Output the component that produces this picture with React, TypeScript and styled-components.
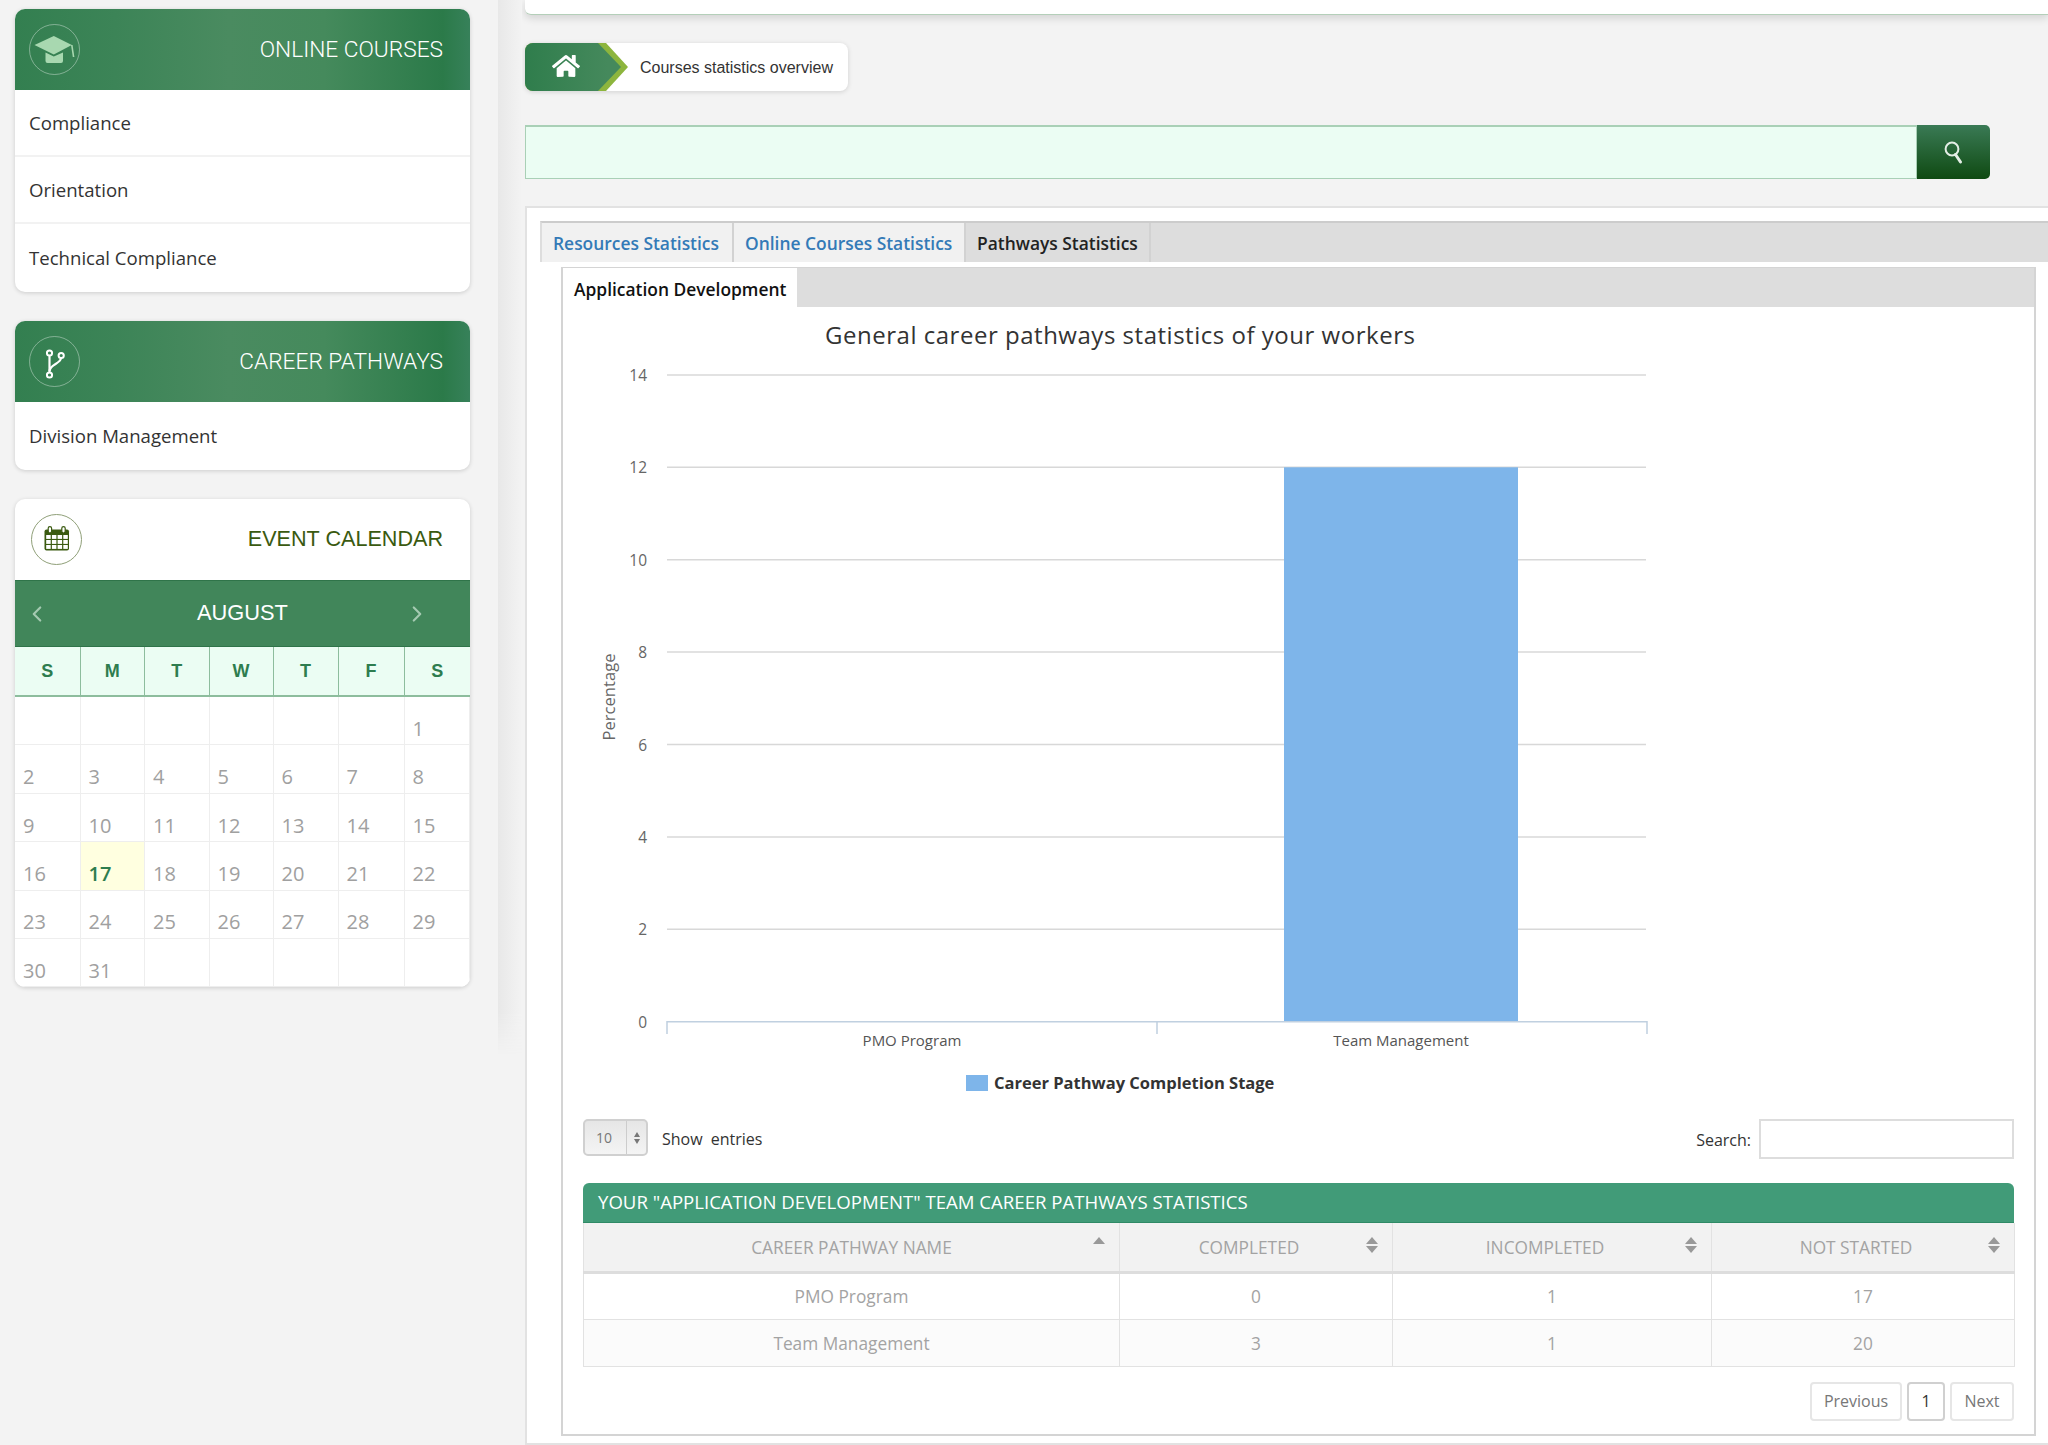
import React from "react";
import styled, { createGlobalStyle } from "styled-components";
import { FaHome } from "react-icons/fa";
import { ChevronLeft, ChevronRight } from "lucide-react";

const GlobalStyle = createGlobalStyle`
  html, body {
    margin: 0;
    padding: 0;
    background: #f3f3f3;
  }
  * {
    box-sizing: border-box;
  }
`;

const sans = `"Open Sans", "Liberation Sans", sans-serif`;
const arial = `"Liberation Sans", Arial, sans-serif`;

const Page = styled.div`
  width: 2048px;
  height: 1445px;
  display: flex;
  overflow: hidden;
  background: #f3f3f3;
  font-family: ${sans};
`;

const Sidebar = styled.aside`
  width: 498px;
  flex: none;
  padding: 9px 28px 0 15px;
  display: flex;
  flex-direction: column;
  gap: 29px;
`;

const Card = styled.section`
  background: #fff;
  border-radius: 10px;
  box-shadow: 0 1px 4px rgba(0, 0, 0, 0.16);
  overflow: hidden;
`;

const CardHead = styled.header`
  height: 81px;
  padding: 0 27px 0 14px;
  display: flex;
  align-items: center;
  justify-content: space-between;
  background: linear-gradient(90deg, #337f50 0%, #3c8457 22%, #4a8b60 47%, #458a5c 68%, #2b7a49 94%, #37815a 100%);
`;

const CardTitle = styled.h2`
  margin: 0 0 1px;
  font-family: Roboto, ${arial};
  font-weight: 300;
  font-size: 22.7px;
  color: #fff;
`;

const CardItem = styled.div<{ $last?: boolean }>`
  height: ${(p) => (p.$last ? 68 : 67)}px;
  padding: 0 0 ${(p) => (p.$last ? 2 : 0)}px 14px;
  display: flex;
  align-items: center;
  font-size: 18.6px;
  color: #333;
  border-bottom: ${(p) => (p.$last ? "none" : "2px solid #f2f2f2")};
`;

const CalendarHead = styled.header`
  height: 81px;
  padding: 0 27px 0 16px;
  display: flex;
  align-items: center;
  justify-content: space-between;
`;

const CalendarTitle = styled.h2`
  margin: 0 0 2px;
  font-family: ${arial};
  font-weight: 400;
  font-size: 21.6px;
  color: #3a5a10;
`;

const MonthBar = styled.div`
  height: 67px;
  padding: 0 9px;
  display: grid;
  grid-template-columns: 1fr auto 1fr;
  align-items: center;
  background: #41865a;
  border-top: 1px solid #2f7449;
  border-bottom: 1px solid #2f7449;
  color: #a3c9b0;
`;

const MonthArrow = styled.span<{ $right?: boolean }>`
  display: flex;
  justify-content: ${(p) => (p.$right ? "flex-end" : "flex-start")};
  padding-right: ${(p) => (p.$right ? "31px" : "0")};
`;

const MonthName = styled.span`
  font-family: ${arial};
  font-size: 21.8px;
  color: #fff;
  margin-bottom: 1px;
`;

const Weekdays = styled.div`
  height: 50px;
  display: grid;
  grid-template-columns: 65.5px 64.5px 64.5px 64px 65px 66px 65.5px;
  background: #ebfdf3;
  border-bottom: 2px solid #8dbd9d;
`;

const Weekday = styled.div<{ $last?: boolean }>`
  display: flex;
  align-items: center;
  justify-content: center;
  font-family: ${arial};
  font-weight: 700;
  font-size: 18px;
  color: #2e7d4f;
  border-right: ${(p) => (p.$last ? "none" : "1px solid #8dbd9d")};
`;

const Days = styled.div`
  display: grid;
  grid-template-columns: 65.5px 64.5px 64.5px 64px 65px 66px 65.5px;
  grid-auto-rows: 48.4px;
`;

const Day = styled.div<{ $today?: boolean }>`
  padding: 0 0 2.5px 8px;
  display: flex;
  align-items: flex-end;
  font-size: 20px;
  font-weight: ${(p) => (p.$today ? 600 : 400)};
  color: ${(p) => (p.$today ? "#2e7d4f" : "#a0a0a0")};
  background: ${(p) => (p.$today ? "#ffffe0" : "#fff")};
  border-right: 1px solid #eee;
  border-bottom: 1px solid #eee;
`;

const Main = styled.main`
  position: relative;
  flex: 1;
  min-width: 0;
  padding-left: 27px;
  display: flex;
  flex-direction: column;
  &::before {
    content: "";
    position: absolute;
    left: 0;
    top: 0;
    width: 24px;
    height: 1055px;
    background: linear-gradient(90deg, #e8e8e8, #f3f3f3);
    -webkit-mask-image: linear-gradient(180deg, #000 96%, transparent);
    mask-image: linear-gradient(180deg, #000 96%, transparent);
  }
`;

const TopStrip = styled.div`
  height: 15px;
  flex: none;
  background: #fff;
  border-bottom: 1px solid #b4cfb9;
  border-bottom-left-radius: 6px;
  box-shadow: 0 3px 8px rgba(0, 0, 0, 0.14);
`;

const Breadcrumb = styled.nav`
  margin-top: 28px;
  width: 323px;
  height: 48px;
  flex: none;
  display: flex;
  align-items: center;
  background: #fff;
  border-radius: 8px;
  box-shadow: 0 1px 5px rgba(0, 0, 0, 0.14);
  overflow: hidden;
`;

const HomeChevron = styled.div`
  width: 103px;
  height: 48px;
  flex: none;
  background: #8db53d;
  clip-path: polygon(0 0, 81px 0, 103px 50%, 81px 100%, 0 100%);
`;

const HomeTab = styled.div`
  height: 48px;
  padding: 0 0 2px 27px;
  display: flex;
  align-items: center;
  background: linear-gradient(90deg, #2f7d4c, #45895c 80%);
  color: #fff;
  clip-path: polygon(0 0, 73px 0, 96px 50%, 73px 100%, 0 100%);
`;

const CrumbText = styled.span`
  margin: 2px 0 0 12px;
  font-family: ${arial};
  font-size: 16px;
  color: #333;
`;

const SearchRow = styled.div`
  margin-top: 34px;
  height: 54px;
  flex: none;
  display: flex;
`;

const SearchInput = styled.input`
  width: 1392px;
  height: 54px;
  background: #ebfdf3;
  border: 1px solid #a9d0b6;
  border-top-width: 2px;
  outline: none;
`;

const SearchButton = styled.button`
  width: 73px;
  height: 54px;
  padding: 0;
  display: flex;
  align-items: center;
  justify-content: center;
  background: linear-gradient(180deg, #3a7a55, #0f4a12);
  border: none;
  border-radius: 0 5px 5px 0;
`;

const Panel = styled.section`
  margin: 27px -4px 0 0;
  flex: 1;
  padding: 13px 0 0 13px;
  background: #fff;
  border: 2px solid #e2e2e2;
`;

const TabBar = styled.div`
  height: 41px;
  display: flex;
  background: #ddd;
  border-top: 2px solid #ccc;
  border-left: 2px solid #ddd;
`;

const Tab = styled.div<{ $active?: boolean; $width: number }>`
  width: ${(p) => p.$width}px;
  padding-left: 11px;
  display: flex;
  align-items: center;
  font-size: 17.4px;
  font-weight: 600;
  color: ${(p) => (p.$active ? "#222" : "#337ab7")};
  background: ${(p) => (p.$active ? "#ddd" : "#f1f1f1")};
  border-right: 2px solid #d2d2d2;
`;

const Inner = styled.div`
  margin: 5px 0 0 21px;
  width: 1475px;
  height: 1169px;
  background: #fff;
  border: 2px solid #d4d4d4;
  border-top-width: 1px;
`;

const InnerBar = styled.div`
  height: 39px;
  background: #ddd;
`;

const InnerTab = styled.div`
  width: 234px;
  height: 39px;
  padding: 2px 0 0 11px;
  display: flex;
  align-items: center;
  font-size: 17.4px;
  font-weight: 600;
  color: #111;
  background: #fff;
`;

const Chart = styled.svg`
  display: block;
  width: 1471px;
  height: 798px;
  font-family: ${sans};
`;

const Controls = styled.div`
  margin-top: 14px;
  padding: 0 20px;
  height: 40px;
  display: flex;
  justify-content: space-between;
`;

const LengthGroup = styled.label`
  display: flex;
  align-items: flex-start;
  gap: 14px;
  font-size: 16px;
  color: #333;
`;

const LengthSelect = styled.div`
  width: 65px;
  height: 37px;
  display: grid;
  grid-template-columns: 42px 1fr;
  background: linear-gradient(180deg, #e6e6e6, #f4f4f4);
  border: 2px solid #d0d0d0;
  border-radius: 5px;
  font-size: 14px;
  color: #777;
`;

const SelectValue = styled.span`
  padding-right: 3px;
  display: flex;
  align-items: center;
  justify-content: center;
  border-right: 1px solid #ccc;
`;

const SelectArrows = styled.span`
  display: flex;
  align-items: center;
  justify-content: center;
`;

const LengthText = styled.span`
  margin-top: 9px;
  word-spacing: 4px;
`;

const SearchGroup = styled.label`
  display: flex;
  align-items: flex-start;
  gap: 8px;
  font-size: 16px;
  color: #333;
`;

const SearchLabel = styled.span`
  margin-top: 10px;
`;

const FilterInput = styled.input`
  width: 255px;
  height: 40px;
  background: #fff;
  border: 2px solid #ddd;
  outline: none;
`;

const Caption = styled.div`
  margin: 24px 20px 0;
  height: 40px;
  padding: 0 0 2px 15px;
  display: flex;
  align-items: center;
  font-size: 18.6px;
  color: #fff;
  background: #419b78;
  border-bottom: 1px solid #2f8a66;
  border-radius: 6px 6px 0 0;
`;

const Table = styled.table`
  margin: 0 20px;
  width: 1431px;
  border-collapse: collapse;
  table-layout: fixed;
  color: #a3a3a3;
  font-size: 17.3px;
`;

const HeadCell = styled.th<{ $width: number; $first?: boolean }>`
  position: relative;
  width: ${(p) => p.$width}px;
  height: 49px;
  padding: 1px ${(p) => (p.$first ? 0 : 14)}px 0 0;
  background: #f2f2f2;
  font-weight: 400;
  text-align: center;
  border: 1px solid #e2e2e2;
  border-top: none;
  border-bottom: 3px solid #ddd;
`;

const SortIcon = styled.svg`
  position: absolute;
  right: 13px;
  top: 13px;
`;

const BodyRow = styled.tr<{ $alt?: boolean }>`
  background: ${(p) => (p.$alt ? "#fbfbfb" : "#fff")};
`;

const BodyCell = styled.td`
  height: 47px;
  padding: 1px 0 0;
  text-align: center;
  border: 1px solid #e2e2e2;
`;

const Pager = styled.div`
  margin: 15px 20px 0;
  display: flex;
  justify-content: flex-end;
  gap: 5px;
`;

const PageButton = styled.span<{ $current?: boolean; $width: number }>`
  width: ${(p) => p.$width}px;
  height: 39px;
  display: flex;
  align-items: center;
  justify-content: center;
  font-size: 16px;
  color: ${(p) => (p.$current ? "#333" : "#777")};
  background: #fff;
  border: 2px solid ${(p) => (p.$current ? "#d0d0d0" : "#e6e6e6")};
  border-radius: 4px;
`;

const GradCap = () => (
  <svg width="51" height="51" viewBox="0 0 51 51">
    <circle cx="25.5" cy="25.5" r="25" fill="none" stroke="rgba(255,255,255,0.38)" strokeWidth="1" />
    <path d="M16.5 28.5 L24.8 32.5 L34 28.5 V37 Q34 39 32 39 H18.5 Q16.5 39 16.5 37 Z" fill="#a8d8b0" />
    <path d="M5.5 21 L24.8 12 L42.8 21 L24.8 30.5 Z" fill="#a8d8b0" />
    <path d="M42.8 21 L44.6 33" stroke="#a8d8b0" strokeWidth="1.6" fill="none" />
  </svg>
);

const BranchIcon = () => (
  <svg width="51" height="51" viewBox="0 0 51 51">
    <circle cx="25.5" cy="25.5" r="25" fill="none" stroke="rgba(255,255,255,0.38)" strokeWidth="1" />
    <g fill="none" stroke="#fff" strokeWidth="2">
      <circle cx="20.5" cy="17" r="2.6" />
      <circle cx="32.2" cy="19.5" r="2.6" />
      <circle cx="20.5" cy="39" r="2.6" />
      <path d="M20.5 19.6 V36.4" strokeWidth="2.2" />
      <path d="M32 22 C31.5 28 21 28 20.5 35" strokeWidth="2.2" />
    </g>
  </svg>
);

const CalendarIcon = () => (
  <svg width="51" height="51" viewBox="0 0 51 51">
    <circle cx="25.5" cy="25.5" r="25" fill="#fff" stroke="#8f9f78" strokeWidth="1" />
    <rect x="13.5" y="15.5" width="24.5" height="21" rx="2" fill="#3a5a10" />
    <g fill="#fff">
      {[0, 1, 2, 3].map((col) =>
        [0, 1, 2].map((row) => (
          <rect key={`${col}-${row}`} x={15.2 + col * 5.7} y={21 + row * 5} width="4.5" height="3.9" />
        ))
      )}
    </g>
    <rect x="17.2" y="12.6" width="3.4" height="6.4" rx="1.7" fill="#fff" stroke="#3a5a10" strokeWidth="1.2" />
    <rect x="30.8" y="12.6" width="3.4" height="6.4" rx="1.7" fill="#fff" stroke="#3a5a10" strokeWidth="1.2" />
  </svg>
);

const SearchGlyph = () => (
  <svg width="22" height="24" viewBox="0 0 22 24">
    <circle cx="9" cy="9" r="6.4" fill="none" stroke="#e4eee6" strokeWidth="2" />
    <path d="M12.5 14.5 L17.5 22" stroke="#e4eee6" strokeWidth="3" strokeLinecap="round" />
  </svg>
);

const SortArrows = ({ up }: { up?: boolean }) => (
  <SortIcon width="14" height="18" viewBox="0 0 14 18">
    <path d="M1 8 L7 1 L13 8 Z" fill="#999" />
    {!up && <path d="M1 10 L7 17 L13 10 Z" fill="#999" />}
  </SortIcon>
);

const yTicks = [14, 12, 10, 8, 6, 4, 2, 0];
const chartZero = 1021.7;
const perUnit = 46.2;

const CareerChart = () => (
  <Chart viewBox="563 307 1471 798">
    <text x="825" y="344" fontSize="24" letterSpacing="0.52" fill="#333">
      General career pathways statistics of your workers
    </text>
    {yTicks.slice(0, 7).map((t) => (
      <line key={t} x1="667" x2="1646" y1={chartZero - t * perUnit} y2={chartZero - t * perUnit} stroke="#d8d8d8" strokeWidth="1.5" />
    ))}
    {yTicks.map((t) => (
      <text key={t} x="647" y={chartZero - t * perUnit + 6} textAnchor="end" fontSize="15.5" fill="#666">
        {t}
      </text>
    ))}
    <text transform="translate(615 697) rotate(-90)" textAnchor="middle" fontSize="16.6" fill="#666">
      Percentage
    </text>
    <rect x="1284" y={chartZero - 12 * perUnit} width="234" height={12 * perUnit} fill="#7eb5ea" />
    <path d="M667 1034 V1021.7 H1647 V1034 M1157 1021.7 V1034" fill="none" stroke="#c0d0e0" strokeWidth="1.5" />
    <text x="912" y="1046" textAnchor="middle" fontSize="15" fill="#555">
      PMO Program
    </text>
    <text x="1401" y="1046" textAnchor="middle" fontSize="15" fill="#555">
      Team Management
    </text>
    <rect x="966" y="1075" width="22" height="16" fill="#7eb5ea" />
    <text x="994" y="1089" fontSize="16.5" fontWeight="700" fill="#333">
      Career Pathway Completion Stage
    </text>
  </Chart>
);

const dayRows: (number | null)[][] = [
  [null, null, null, null, null, null, 1],
  [2, 3, 4, 5, 6, 7, 8],
  [9, 10, 11, 12, 13, 14, 15],
  [16, 17, 18, 19, 20, 21, 22],
  [23, 24, 25, 26, 27, 28, 29],
  [30, 31, null, null, null, null, null],
];

const columns = [
  { name: "CAREER PATHWAY NAME", width: 536, up: true },
  { name: "COMPLETED", width: 273 },
  { name: "INCOMPLETED", width: 319 },
  { name: "NOT STARTED", width: 303 },
];

const rows = [
  ["PMO Program", "0", "1", "17"],
  ["Team Management", "3", "1", "20"],
];

export default function App() {
  return (
    <Page>
      <GlobalStyle />
      <Sidebar>
        <Card>
          <CardHead>
            <GradCap />
            <CardTitle>ONLINE COURSES</CardTitle>
          </CardHead>
          <CardItem>Compliance</CardItem>
          <CardItem>Orientation</CardItem>
          <CardItem $last>Technical Compliance</CardItem>
        </Card>
        <Card>
          <CardHead>
            <BranchIcon />
            <CardTitle>CAREER PATHWAYS</CardTitle>
          </CardHead>
          <CardItem $last>Division Management</CardItem>
        </Card>
        <Card>
          <CalendarHead>
            <CalendarIcon />
            <CalendarTitle>EVENT CALENDAR</CalendarTitle>
          </CalendarHead>
          <MonthBar>
            <MonthArrow>
              <ChevronLeft size={26} />
            </MonthArrow>
            <MonthName>AUGUST</MonthName>
            <MonthArrow $right>
              <ChevronRight size={26} />
            </MonthArrow>
          </MonthBar>
          <Weekdays>
            {["S", "M", "T", "W", "T", "F", "S"].map((d, i) => (
              <Weekday key={i} $last={i === 6}>
                {d}
              </Weekday>
            ))}
          </Weekdays>
          <Days>
            {dayRows.flat().map((d, i) => (
              <Day key={i} $today={d === 17}>
                {d}
              </Day>
            ))}
          </Days>
        </Card>
      </Sidebar>
      <Main>
        <TopStrip />
        <Breadcrumb>
          <HomeChevron>
            <HomeTab>
              <FaHome size={28} />
            </HomeTab>
          </HomeChevron>
          <CrumbText>Courses statistics overview</CrumbText>
        </Breadcrumb>
        <SearchRow>
          <SearchInput />
          <SearchButton>
            <SearchGlyph />
          </SearchButton>
        </SearchRow>
        <Panel>
          <TabBar>
            <Tab $width={192}>Resources Statistics</Tab>
            <Tab $width={232}>Online Courses Statistics</Tab>
            <Tab $width={185} $active>
              Pathways Statistics
            </Tab>
          </TabBar>
          <Inner>
            <InnerBar>
              <InnerTab>Application Development</InnerTab>
            </InnerBar>
            <CareerChart />
            <Controls>
              <LengthGroup>
                <LengthSelect>
                  <SelectValue>10</SelectValue>
                  <SelectArrows>
                    <svg width="8" height="14" viewBox="0 0 8 14">
                      <path d="M1 6 L4 1 L7 6 Z M1 8 L4 13 L7 8 Z" fill="#777" />
                    </svg>
                  </SelectArrows>
                </LengthSelect>
                <LengthText>Show entries</LengthText>
              </LengthGroup>
              <SearchGroup>
                <SearchLabel>Search:</SearchLabel>
                <FilterInput />
              </SearchGroup>
            </Controls>
            <Caption>YOUR "APPLICATION DEVELOPMENT" TEAM CAREER PATHWAYS STATISTICS</Caption>
            <Table>
              <thead>
                <tr>
                  {columns.map((c, i) => (
                    <HeadCell key={c.name} $width={c.width} $first={i === 0}>
                      {c.name}
                      <SortArrows up={c.up} />
                    </HeadCell>
                  ))}
                </tr>
              </thead>
              <tbody>
                {rows.map((r, i) => (
                  <BodyRow key={r[0]} $alt={i === 1}>
                    {r.map((v, j) => (
                      <BodyCell key={j}>{v}</BodyCell>
                    ))}
                  </BodyRow>
                ))}
              </tbody>
            </Table>
            <Pager>
              <PageButton $width={92}>Previous</PageButton>
              <PageButton $width={38} $current>
                1
              </PageButton>
              <PageButton $width={64}>Next</PageButton>
            </Pager>
          </Inner>
        </Panel>
      </Main>
    </Page>
  );
}
